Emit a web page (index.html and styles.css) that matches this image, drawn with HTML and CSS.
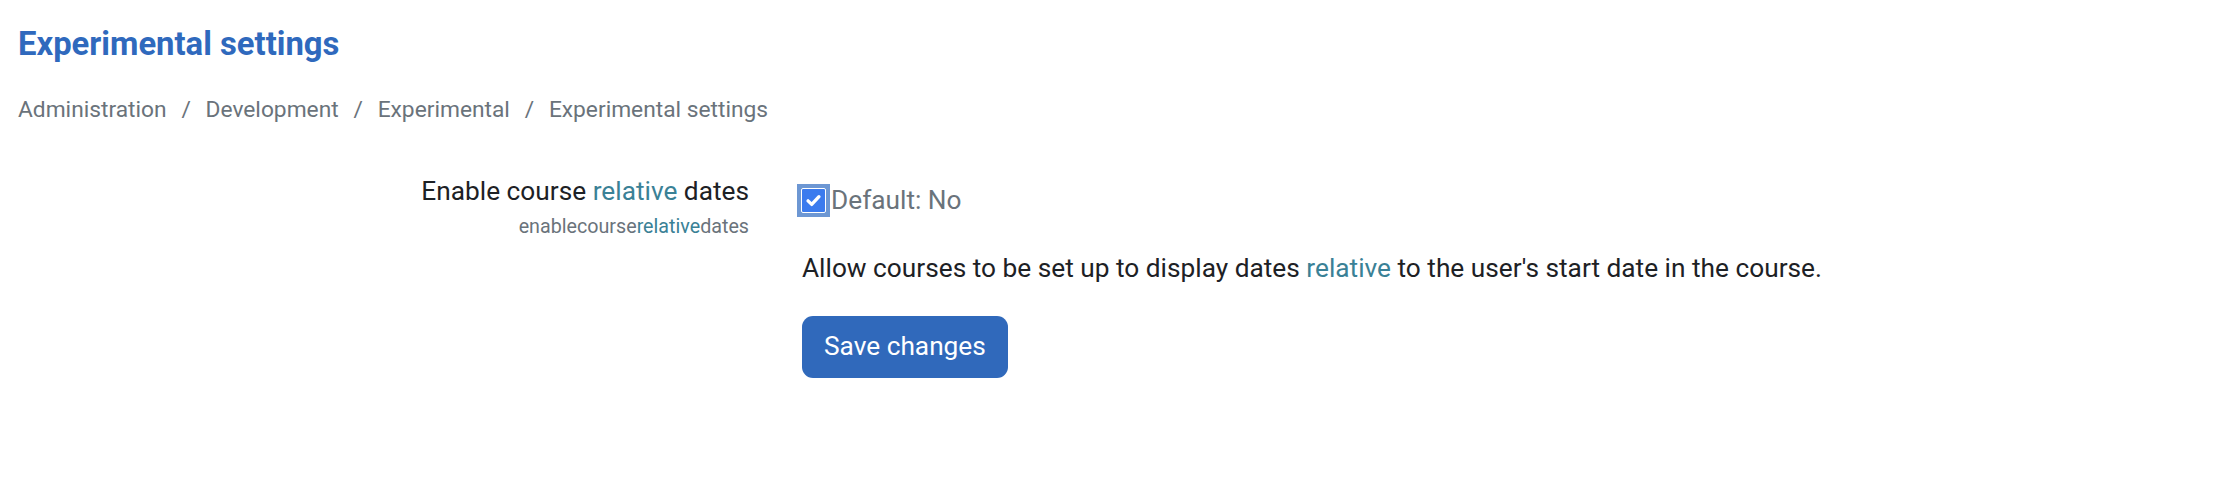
FILE: index.html
```html
<!DOCTYPE html>
<html lang="en">
<head>
<meta charset="utf-8">
<title>Experimental settings</title>
<link rel="stylesheet" href="styles.css">
</head>
<body>
<div class="page">
  <header class="page-header">
    <h2 class="page-title">Experimental settings</h2>
    <nav class="breadcrumb">
      <span class="crumb">Administration</span>
      <span class="sep">/</span>
      <span class="crumb">Development</span>
      <span class="sep">/</span>
      <span class="crumb">Experimental</span>
      <span class="sep">/</span>
      <span class="crumb">Experimental settings</span>
    </nav>
  </header>

  <form class="settings">
    <div class="setting-row">
      <div class="setting-label">
        <div class="label-main">Enable course <span class="hl">relative</span> dates</div>
        <div class="label-key">enablecourse<span class="hl">relative</span>dates</div>
      </div>
      <div class="setting-control">
        <div class="check-line">
          <span class="check-ring">
            <span class="check-box">
              <svg viewBox="0 0 16 16" aria-hidden="true">
                <path d="M3.4 8.3 L6.5 11.3 L12.6 4.8" fill="none" stroke="#fff" stroke-width="2.8" stroke-linecap="round" stroke-linejoin="round"/>
              </svg>
            </span>
          </span>
          <span class="default-text">Default: No</span>
        </div>
        <p class="description">Allow courses to be set up to display dates <span class="hl">relative</span> to the user's start date in the course.</p>
        <button type="button" class="btn-primary">Save changes</button>
      </div>
    </div>
  </form>
</div>
</body>
</html>
```

FILE: styles.css
```css
html, body {
  margin: 0;
  padding: 0;
  background: #ffffff;
}

body {
  font-family: Roboto, "Liberation Sans", Arial, sans-serif;
  color: #1d2125;
  font-size: 26.25px;
  line-height: 1.5;
}

.page {
  padding: 24.6px 18px 0 18px;
}

.page-title {
  margin: 0;
  font-size: 32.8px;
  font-weight: 700;
  line-height: 1.2;
  color: #2f69bd;
}

.breadcrumb {
  margin-top: 29.5px;
  display: flex;
  align-items: baseline;
  font-size: 22.75px;
  line-height: 1.5;
  color: #6a737b;
}

.sep {
  padding: 0 14.8px;
}

.settings {
  margin-top: 44.7px;
}

.setting-row {
  display: grid;
  grid-template-columns: 731px 1fr;
  column-gap: 53px;
}

.setting-label {
  text-align: right;
}

.label-main {
  font-size: 26.25px;
  line-height: 39.375px;
  color: #1d2125;
}

.label-key {
  font-size: 19.7px;
  line-height: 29.5px;
  color: #6a737b;
}

.hl {
  color: #3a8196;
}

.setting-control {
  padding-top: 8.3px;
}

.check-line {
  display: flex;
  align-items: center;
  height: 39.375px;
}

.check-ring {
  display: flex;
  align-items: center;
  justify-content: center;
  width: 33px;
  height: 33px;
  margin-left: -5px;
  margin-right: 1px;
  background: #6d97d3;
  box-sizing: border-box;
  padding: 4px;
}

.check-box {
  display: flex;
  align-items: center;
  justify-content: center;
  width: 100%;
  height: 100%;
  box-sizing: border-box;
  border: 1px solid #ffffff;
  background: #3b7bee;
  border-radius: 2px;
}

.check-box svg {
  width: 19px;
  height: 19px;
}

.default-text {
  color: #6a737b;
}

.description {
  margin: 28.6px 0 0 0;
  line-height: 39.375px;
  color: #1d2125;
}

.btn-primary {
  display: block;
  margin-top: 28px;
  font-family: inherit;
  font-size: 26.25px;
  line-height: 39.375px;
  padding: 11.3px 22px;
  color: #ffffff;
  background: #3069bb;
  border: none;
  border-radius: 11px;
}
```
